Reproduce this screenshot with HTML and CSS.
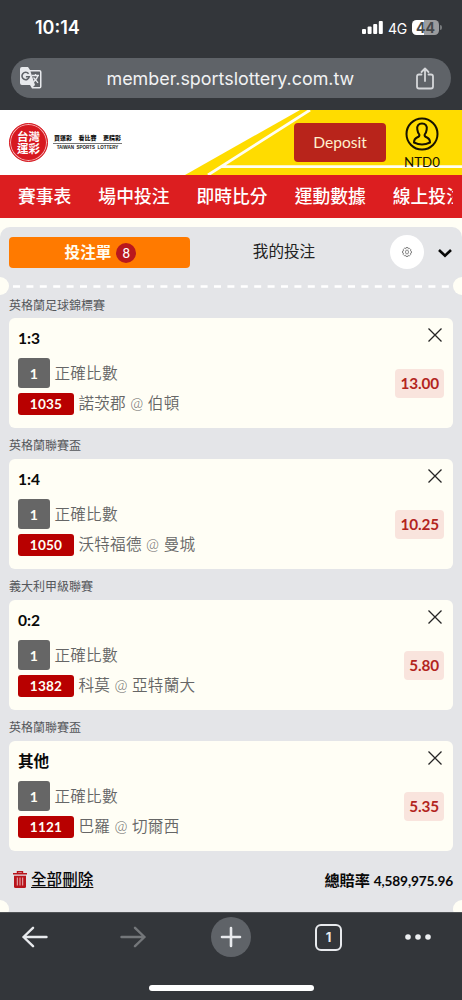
FILE: index.html
```html
<!DOCTYPE html>
<html lang="zh-Hant">
<head>
<meta charset="utf-8">
<title>台灣運彩</title>
<link rel="stylesheet" href="styles.css">
</head>
<body>
<div class="status">
  <span class="time">10:14</span>
  <div class="signals">
    <svg width="21" height="13" viewBox="0 0 21 13" fill="#fff"><rect x="0" y="8" width="4" height="5" rx="1"/><rect x="5.6" y="5.5" width="4" height="7.5" rx="1"/><rect x="11.2" y="3" width="4" height="10" rx="1"/><rect x="16.8" y="0" width="4" height="13" rx="1"/></svg>
    <span class="net">4G</span>
    <span class="battery">44</span><i class="cap"></i>
  </div>
</div>
<div class="urlrow">
  <div class="urlbar">
    <svg width="22" height="22" viewBox="0 0 22 22"><path d="M2 0H8L10 3H19.500Q21.500 3 21.500 5V19.500Q21.500 21.500 19.500 21.500H12L10 18H2Q0 18 0 16V2Q0 0 2 0Z" fill="#e8eaed"/><path d="M10.500 4.500H19.500Q20 4.500 20 5V19.500Q20 20 19.500 20H13L15 18Z" fill="#5f6368"/><path d="M8.600 6.700A3.700 3.700 0 1 0 9.300 9.700H5.900" fill="none" stroke="#5f6368" stroke-width="1.600"/><path d="M12 8.500H19M15.500 7V8.500M18 8.500Q17 12 13.500 15M13.500 10.500L18 15.800" fill="none" stroke="#e8eaed" stroke-width="1.300"/></svg>
    <span class="url">member.sportslottery.com.tw</span>
    <svg width="18" height="23" viewBox="0 0 18 23" fill="none" stroke="#d5d7da" stroke-width="1.800" stroke-linecap="round" stroke-linejoin="round"><path d="M5.500 7.500H3Q1 7.500 1 9.500V19.500Q1 21.500 3 21.500H15Q17 21.500 17 19.500V9.500Q17 7.500 15 7.500H12.500M9 14V1.500M5.500 5L9 1.500L12.500 5"/></svg>
  </div>
</div>
<header class="site">
  <svg class="stripes" width="462" height="65" viewBox="0 0 462 65"><path d="M300 0H462V65H185Z" fill="#ffdc00"/><path d="M310 0L208 65M221 56.700H462" stroke="#fffef3" stroke-width="2.800" fill="none"/></svg>
  <div class="brand">
    <div class="seal"><span>台灣</span><span>運彩</span></div>
    <div class="slogan"><b>買運彩<span>看比賽</span><span>更精彩</span></b><small>TAIWAN&nbsp; SPORTS&nbsp; LOTTERY</small></div>
  </div>
  <div class="deposit">Deposit</div>
  <div class="account">
    <svg width="34" height="34" viewBox="0 0 34 34" fill="none" stroke="#171300" stroke-width="2"><circle cx="17" cy="17" r="15.500"/><path d="M17 6.500C13.500 6.500 11.700 9 12.300 12.500C12.600 14.800 13.300 16.200 14.300 17.500C14.800 19 14 19.700 12 20.500C9.500 21.500 9 23 9 25.500Q17 29.500 25 25.500C25 23 24.500 21.500 22 20.500C20 19.700 19.200 19 19.700 17.500C20.700 16.200 21.400 14.800 21.700 12.500C22.300 9 20.500 6.500 17 6.500Z"/></svg>
    <span>NTD0</span>
  </div>
</header>
<nav><span>賽事表</span><span>場中投注</span><span>即時比分</span><span>運動數據</span><span>線上投注</span></nav>
<main>
  <section class="panel">
    <div class="tabs">
      <div class="tab on">投注單<i>8</i></div>
      <div class="tab">我的投注</div>
      <div class="gear"><svg width="10" height="10" viewBox="0 0 20 20" fill="none" stroke="#666" stroke-width="1.500"><path d="M8 1H12L12.700 3.500L15 2.700L17.700 5.500L16.700 7.700L19 8.500V12L16.700 12.500L17.500 15L14.700 17.600L12.500 16.500L12 19H8L7.400 16.500L5 17.500L2.300 14.700L3.400 12.500L1 12V8L3.400 7.500L2.500 5L5.300 2.300L7.500 3.500Z"/><ellipse cx="10" cy="10" rx="3" ry="4"/></svg></div>
      <svg class="chev" width="14" height="9" viewBox="0 0 14 9" fill="none" stroke="#080808" stroke-width="2.600"><path d="M1 1L7 6.700L13 1"/></svg>
    </div>
    <div class="tear"><i></i><svg width="444" height="3"><path d="M4 1.500H440" stroke="#fff" stroke-width="2.300" stroke-dasharray="7 6.400"/></svg><i></i></div>
    <h3>英格蘭足球錦標賽</h3>
    <article>
      <div class="pick"><h4>1:3</h4><p class="market"><b>1</b><span>正確比數</span></p><p class="match"><b>1035</b><span>諾茨郡 @ 伯頓</span></p></div>
      <div class="side"><svg width="14" height="14" viewBox="0 0 14 14"><path d="M.5 .5L13.500 13.500M13.500 .5L.5 13.500"/></svg><strong>13.00</strong></div>
    </article>
    <h3>英格蘭聯賽盃</h3>
    <article>
      <div class="pick"><h4>1:4</h4><p class="market"><b>1</b><span>正確比數</span></p><p class="match"><b>1050</b><span>沃特福德 @ 曼城</span></p></div>
      <div class="side"><svg width="14" height="14" viewBox="0 0 14 14"><path d="M.5 .5L13.500 13.500M13.500 .5L.5 13.500"/></svg><strong>10.25</strong></div>
    </article>
    <h3>義大利甲級聯賽</h3>
    <article>
      <div class="pick"><h4>0:2</h4><p class="market"><b>1</b><span>正確比數</span></p><p class="match"><b>1382</b><span>科莫 @ 亞特蘭大</span></p></div>
      <div class="side"><svg width="14" height="14" viewBox="0 0 14 14"><path d="M.5 .5L13.500 13.500M13.500 .5L.5 13.500"/></svg><strong>5.80</strong></div>
    </article>
    <h3>英格蘭聯賽盃</h3>
    <article>
      <div class="pick"><h4>其他</h4><p class="market"><b>1</b><span>正確比數</span></p><p class="match"><b>1121</b><span>巴羅 @ 切爾西</span></p></div>
      <div class="side"><svg width="14" height="14" viewBox="0 0 14 14"><path d="M.5 .5L13.500 13.500M13.500 .5L.5 13.500"/></svg><strong>5.35</strong></div>
    </article>
    <div class="total">
      <svg width="14" height="17" viewBox="0 0 14 17"><path d="M0 2.700H14M4.500 2.500V.7H9.500V2.500" stroke="#b8141c" stroke-width="1.400" fill="none"/><path d="M1 4.700H13V15.500Q13 17 11.500 17H2.500Q1 17 1 15.500Z" fill="#b8141c"/><path d="M4.300 6.500V14.500M7 6.500V14.500M9.700 6.500V14.500" stroke="#e8b6ba" stroke-width="1"/></svg>
      <span class="clear">全部刪除</span>
      <span class="sum">總賠率 <span>4,589,975.96</span></span>
    </div>
    <div class="notches"><i></i><i></i></div>
  </section>
</main>
<footer>
  <div class="tools">
    <svg width="26" height="22" viewBox="0 0 26 22" fill="none" stroke="#e8eaed" stroke-width="2.400" stroke-linecap="round" stroke-linejoin="round"><path d="M24.500 11H1.500M11 1.800L1.500 11L11 20.200"/></svg>
    <svg width="26" height="22" viewBox="0 0 26 22" fill="none" stroke="#74777a" stroke-width="2.400" stroke-linecap="round" stroke-linejoin="round"><path d="M1.500 11H24.500M15 1.800L24.500 11L15 20.200"/></svg>
    <svg width="40" height="40" viewBox="0 0 40 40"><circle cx="20" cy="20" r="20" fill="#5f6368"/><path d="M20 11V29M11 20H29" stroke="#e8eaed" stroke-width="2.600" stroke-linecap="round"/></svg>
    <div class="count">1</div>
    <svg width="26" height="6" viewBox="0 0 26 6" fill="#eceef0"><circle cx="3" cy="3" r="2.800"/><circle cx="13" cy="3" r="2.800"/><circle cx="23" cy="3" r="2.800"/></svg>
  </div>
  <div class="home"></div>
</footer>
</body>
</html>
```
FILE: styles.css
```css
* { box-sizing: border-box; }
body { margin: 0; width: 462px; height: 1000px; overflow: hidden; background: #33363a; font-family: Lato, "Noto Sans CJK TC", sans-serif; }
svg { display: block; flex: none; }
i { font-style: normal; }
h3, h4, p { margin: 0; }

.status { height: 58px; padding: 0 20px 3px 35px; display: flex; align-items: center; justify-content: space-between; color: #fff; font-family: Inter, sans-serif; }
.time { font-size: 18px; font-weight: 600; letter-spacing: 0; }
.signals { display: flex; align-items: center; }
.net { font-size: 14px; margin: 1px 5px 0 5px; letter-spacing: -.3px; }
.battery { width: 27px; height: 15px; border-radius: 4.500px; background: linear-gradient(90deg, #fff 44%, #9b9c9e 44%); color: #45484a; font-size: 14px; font-weight: 700; line-height: 15px; text-align: center; }
.cap { width: 2px; height: 5px; margin-left: 1px; border-radius: 0 2px 2px 0; background: #76797b; }

.urlrow { height: 52px; padding: 0 11px; }
.urlbar { height: 40px; border-radius: 20px; background: #5f6368; display: flex; align-items: center; justify-content: space-between; padding: 0 17px 0 9px; color: #f1f2f3; font-family: Inter, sans-serif; }
.url { font-size: 17.900px; width: 249px; white-space: nowrap; margin-left: 12px; margin-right: 8px; }

.site { height: 65px; position: relative; background: #fff; display: flex; align-items: center; }
.stripes { position: absolute; inset: 0; }
.brand { position: relative; display: flex; align-items: center; width: 294px; padding-left: 9px; gap: 5px; }
.seal { width: 39px; height: 39px; border-radius: 50%; background: #d71920; border: 1px solid #d71920; box-shadow: inset 0 0 0 1px #f5b5b7; color: #fff; display: flex; flex-direction: column; align-items: center; justify-content: center; font-size: 11.500px; font-weight: 700; line-height: 12px; }
.slogan { width: 69px; text-align: center; display: flex; flex-direction: column; color: #151515; }
.slogan b { font-size: 6px; line-height: 10px; font-weight: 900; white-space: nowrap; border-bottom: 1px solid #777; }
.slogan b span { margin-left: 6.500px; }
.slogan small { font: bold 4.500px/8px "Liberation Sans", sans-serif; white-space: nowrap; }
.deposit { position: relative; width: 92px; height: 39px; border-radius: 4px; background: #b8241b; color: #fff0ce; font-size: 15.600px; text-align: center; line-height: 39px; }
.account { position: relative; width: 72px; display: flex; flex-direction: column; align-items: center; font-size: 13.300px; line-height: 14px; color: #171300; gap: 4px; padding-top: 1px; }

nav { height: 43px; background: #dc1e20; color: #fff; display: flex; gap: 27px; padding-left: 18px; white-space: nowrap; font-size: 17.800px; font-weight: 500; line-height: 43px; }
nav span { flex: none; }
nav span:last-child { width: 60px; overflow: hidden; }

main { height: 694px; padding-top: 9px; background: #fffef5; }
.panel { height: 685px; background: #e4e5e8; border-radius: 10px 10px 0 0; overflow: hidden; }
.tabs { height: 51px; display: flex; align-items: center; padding-left: 9px; }
.tab { width: 181px; height: 31px; display: flex; align-items: center; justify-content: center; font-size: 15.600px; line-height: 24px; padding-bottom: 3px; color: #222; }
.tab.on { background: #ff7a00; border-radius: 4px; color: #fffdf0; font-weight: 700; gap: 5px; padding: 0 0 1px 2px; }
.tab i { width: 20px; height: 20px; margin-top: 2px; border-radius: 50%; background: #b9181d; color: #fff; font-size: 13px; font-weight: 500; line-height: 20px; text-align: center; }
.tab:nth-child(2) { width: 188px; }
.gear { width: 34px; height: 34px; margin: 0 0 1px 12px; border-radius: 50%; background: #fff; display: flex; align-items: center; justify-content: center; }
.chev { margin: 2px 0 0 14px; }
.tear { height: 16px; margin: 0 -9px; display: flex; align-items: center; justify-content: space-between; }
.tear i, .notches i { width: 18px; height: 18px; border-radius: 50%; background: #fffef5; }

h3 { height: 31.500px; padding: 3px 9px 0; font-size: 12px; line-height: 30px; font-weight: 400; color: #55575b; }
.tear + h3 { height: 24px; padding-top: 1px; line-height: 21px; }
article { height: 109.500px; margin: 0 9px; border-radius: 6px; background: #fffef5; padding: 9px; display: flex; justify-content: space-between; }
.pick { color: #666; font-size: 15.600px; }
h4 { height: 31px; line-height: 22px; font-size: 15.600px; font-weight: 700; color: #090909; }
.pick p { display: flex; align-items: center; gap: 5px; white-space: nowrap; letter-spacing: .2px; }
.pick p span { padding-bottom: 3px; margin-left: -.5px; font-weight: 350; }
.pick b { display: flex; align-items: center; justify-content: center; border-radius: 3px; color: #fffef5; font-size: 14px; }
.market { height: 30px; }
.market b { width: 32px; height: 30px; background: #666; }
.match { height: 22.500px; margin-top: 4.500px; }
.match b { width: 56px; height: 22.500px; background: #b80000; font-size: 13.600px; }
.side { display: flex; flex-direction: column; align-items: flex-end; justify-content: space-between; padding: 2px 0 21px; }
.side svg { margin: -1px 2px 0 0; fill: none; stroke: #252525; stroke-width: 1.300; }
.side strong { height: 28.500px; padding: 0 5px; border-radius: 4px; background: #f9e4dd; color: #b3251e; font-size: 15.300px; letter-spacing: -.1px; line-height: 29px; }

.total { height: 53px; padding: 4px 9px 0 13px; display: flex; align-items: center; color: #080808; font-size: 15.600px; font-weight: 500; }
.clear { margin: -2px 0 0 4px; text-decoration: underline; text-underline-offset: 2px; text-decoration-thickness: 1px; }
.sum { margin: -1px 0 0 auto; font-weight: 700; font-size: 15.200px; white-space: nowrap; }
.sum span { font-size: 13.700px; letter-spacing: -.15px; }
.notches { display: flex; justify-content: space-between; margin: -4px -9px 0; }

footer { height: 88px; background: #33363a; border-top: 1px solid #505356; padding-top: 4px; display: flex; flex-direction: column; align-items: center; }
.tools { width: 462px; height: 40px; padding: 0 31px 0 22px; display: flex; align-items: center; }
.tools svg:nth-child(2) { margin-left: 72px; }
.tools svg:nth-child(3) { margin-left: 65px; }
.count { width: 27px; height: 27px; margin-left: 64px; border: 2px solid #e8eaed; border-radius: 6px; color: #e8eaed; font: bold 13px/23px Inter, sans-serif; text-align: center; }
.tools svg:last-child { margin-left: 63px; }
.home { width: 165px; height: 6px; margin-top: 28px; border-radius: 3px; background: #fff; }
```
